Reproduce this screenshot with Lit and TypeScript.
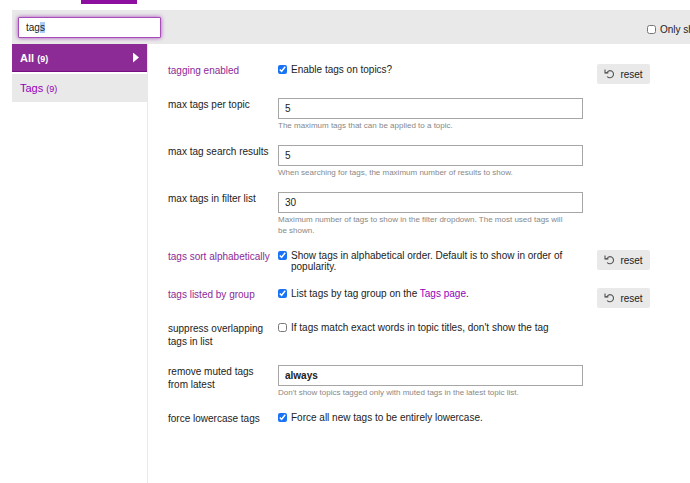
import { html, css, svg, nothing, LitElement, TemplateResult } from 'lit';
import { customElement, property, query, state } from 'lit/decorators.js';
import { classMap } from 'lit/directives/class-map.js';

interface Setting {
  id: string;
  name: string;
  type: 'bool' | 'number' | 'enum';
  value: string | boolean;
  description: string | TemplateResult;
  overridden?: boolean;
  choices?: string[];
}

const settings: Setting[] = [
  { id: 'tagging_enabled', name: 'tagging enabled', type: 'bool', value: true, overridden: true,
    description: 'Enable tags on topics?' },
  { id: 'max_tags_per_topic', name: 'max tags per topic', type: 'number', value: '5',
    description: 'The maximum tags that can be applied to a topic.' },
  { id: 'max_tag_search_results', name: 'max tag search results', type: 'number', value: '5',
    description: 'When searching for tags, the maximum number of results to show.' },
  { id: 'max_tags_in_filter_list', name: 'max tags in filter list', type: 'number', value: '30',
    description: 'Maximum number of tags to show in the filter dropdown. The most used tags will be shown.' },
  { id: 'tags_sort_alphabetically', name: 'tags sort alphabetically', type: 'bool', value: true, overridden: true,
    description: 'Show tags in alphabetical order. Default is to show in order of popularity.' },
  { id: 'tags_listed_by_group', name: 'tags listed by group', type: 'bool', value: true, overridden: true,
    description: html`List tags by tag group on the <a href="#tags">Tags page</a>.` },
  { id: 'suppress_overlapping', name: 'suppress overlapping tags in list', type: 'bool', value: false,
    description: "If tags match exact words in topic titles, don't show the tag" },
  { id: 'remove_muted_tags', name: 'remove muted tags from latest', type: 'enum', value: 'always',
    choices: ['always', 'only muted', 'never'],
    description: "Don't show topics tagged only with muted tags in the latest topic list." },
  { id: 'force_lowercase_tags', name: 'force lowercase tags', type: 'bool', value: true,
    description: 'Force all new tags to be entirely lowercase.' },
];

const undoIcon = svg`
  <path d="M1 .5v3.4h3.4" />
  <path d="M1.2 3.8H3C3.6 2.4 4.6 1.6 5.9 1.6a3.6 3.6 0 1 1-2.8 5.9" />
`;


@customElement('setting-row')

export class SettingRow extends LitElement {
  static styles = css`
    :host {
      display: grid;
      grid-template-columns: 110px minmax(0, 1fr) 67px;
      align-items: start;
      margin-bottom: 14px;
      line-height: 13px;
    }
    .name {
      padding: 0 4px 3px 0;
    }
    .name.overridden {
      color: #8c2a96;
    }
    .check {
      display: grid;
      grid-template-columns: 9px 1fr;
      column-gap: 4px;
      line-height: 11px;
      padding-bottom: 2px;
    }
    .check input {
      width: 9px;
      height: 9px;
      margin: 1px 0;
      accent-color: #1a73f5;
    }
    .text {
      box-sizing: border-box;
      display: block;
      width: 100%;
      height: 21px;
      padding: 0 6px;
      border: 1px solid #a6a6a6;
      border-radius: 0;
      background: #fff;
      color: #222;
      font: inherit;
      appearance: none;
    }
    select.text {
      font-weight: bold;
    }
    .hint {
      margin-top: 1px;
      padding-right: 10px;
      font-size: 8px;
      line-height: 11px;
      color: #888;
    }
    a {
      color: #9400b8;
      text-decoration: none;
    }
    button {
      display: flex;
      align-items: center;
      justify-content: center;
      gap: 6px;
      height: 20px;
      margin-left: 14px;
      padding: 0;
      border: 0;
      border-radius: 2px;
      background: #e9e9e9;
      color: #222;
      font: inherit;
    }
    svg {
      width: 10px;
      height: 10px;
      fill: none;
      stroke: #555;
      stroke-width: 1.1;
    }
  `;

  @property({attribute:false}) setting!: Setting;

  renderField() {
    const s = this.setting;

    if (s.type === 'bool') {
      return html`
        <label class="check">
          <input id="field" type="checkbox" .checked="${s.value as boolean}">
          <span>${s.description}</span>
        </label>
      `;
    }

    return html`
      ${s.type === 'enum'
        ? html`<select id="field" class="text">${s.choices?.map(c => html`<option ?selected="${c === s.value}">${c}</option>`)}</select>`
        : html`<input id="field" class="text" type="text" inputmode="numeric" .value="${s.value as string}">`}
      <div class="hint">${s.description}</div>
    `;
  }

  render() {
    const s = this.setting;
    return html`
      <label for="field" class="${classMap({ name: true, overridden: !!s.overridden })}">${s.name}</label>
      <div>${this.renderField()}</div>
      ${s.overridden
        ? html`<button type="button"><svg viewBox="0 0 10 10" aria-hidden="true">${undoIcon}</svg>reset</button>`
        : nothing}
    `;
  }
}


@customElement('app-root')

export class AppRoot extends LitElement {
  static styles = css`
    :host {
      display: flex;
      flex-direction: column;
      box-sizing: border-box;
      min-height: 100vh;
      padding-left: 12px;
      overflow: hidden;
      background: #fff;
      color: #222;
      font-family: "Liberation Sans", Arial, sans-serif;
      font-size: 10px;
    }
    .tabs {
      height: 10px;
      padding-left: 69px;
    }
    .tab-line {
      width: 56px;
      height: 4px;
      background: #8c0fa0;
    }
    .controls {
      display: flex;
      align-items: center;
      justify-content: space-between;
      height: 34px;
      padding-left: 6px;
      background: #e9e9e9;
    }
    .filter {
      box-sizing: border-box;
      width: 143px;
      height: 21px;
      padding: 0 7px;
      border: 1px solid #a64dba;
      border-radius: 1px;
      outline: 0;
      box-shadow: 0 0 4px #a64dba;
      background: #fff;
      color: #222;
      font: inherit;
    }
    .filter::selection {
      background: #a9cdf8;
      color: #222;
    }
    .only {
      display: flex;
      align-items: center;
      gap: 4px;
      width: 43px;
      padding-top: 4px;
      white-space: nowrap;
    }
    .only input {
      flex: none;
      width: 9px;
      height: 9px;
      margin: 0;
    }
    .body {
      display: flex;
      flex: 1;
    }
    nav {
      display: flex;
      flex-direction: column;
      gap: 2px;
      width: 135px;
      border-right: 1px solid #e9e9e9;
    }
    nav a {
      display: flex;
      align-items: center;
      justify-content: space-between;
      box-sizing: border-box;
      height: 28px;
      padding: 0 8px;
      background: #e9e9e9;
      color: #9400b8;
      font-size: 11px;
      text-decoration: none;
    }
    nav a.active {
      border-bottom: 1px solid #780d84;
      background: #8c2a96;
      color: #fff;
      font-weight: bold;
    }
    nav small {
      font-size: 9px;
    }
    .arrow {
      width: 6px;
      height: 10px;
      background: #fff;
      clip-path: polygon(0 0, 100% 50%, 0 100%);
    }
    main {
      flex: 1;
      min-width: 0;
      padding: 20px 40px 20px 20px;
    }
  `;

  @state() private category = 'All';
  @query('.filter') private filter!: HTMLInputElement;

  firstUpdated() {
    this.filter.focus();
    this.filter.setSelectionRange(3, 4);
  }

  render() {
    return html`
      <div class="tabs"><div class="tab-line"></div></div>

      <div class="controls">
        <input class="filter" type="text" aria-label="Filter settings" value="tags">
        <label class="only"><input type="checkbox">Only show overridden</label>
      </div>

      <div class="body">
        <nav>
          ${['All', 'Tags'].map(name => html`
            <a href="#${name}" class="${classMap({ active: name === this.category })}" @click="${() => this.category = name}">
              <span>${name} <small>(${settings.length})</small></span>
              ${name === this.category ? html`<i class="arrow"></i>` : nothing}
            </a>
          `)}
        </nav>
        <main>
          ${settings.map(s => html`<setting-row .setting="${s}"></setting-row>`)}
        </main>
      </div>
    `;
  }
}
